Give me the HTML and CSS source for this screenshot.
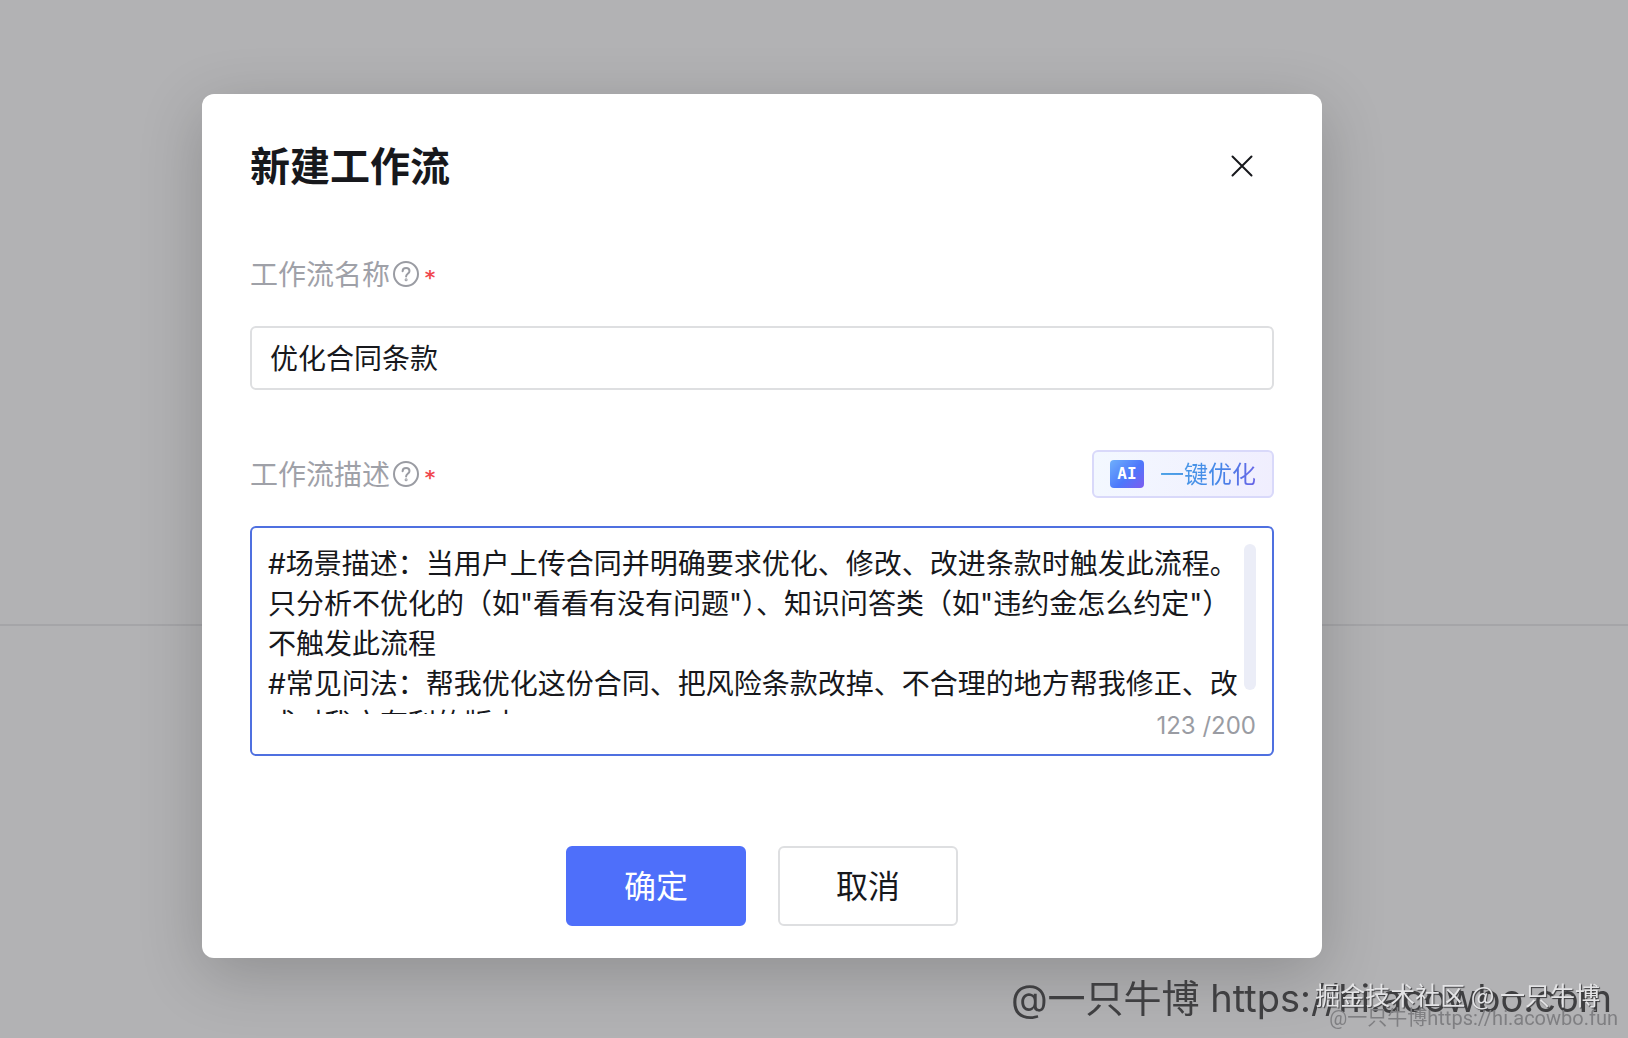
FILE: index.html
```
<!DOCTYPE html>
<html lang="zh-CN">

<head>
    <meta charset="UTF-8">
    <meta name="viewport" content="width=device-width, initial-scale=1.0">
    <title>新建工作流</title>
    <link rel="stylesheet" href="styles.css">
</head>

<body>

    <hr class="page-line">

    <div class="overlay">
        <form class="modal" role="dialog" aria-labelledby="modalTitle">
            <div class="modal-header">
                <h1 id="modalTitle">新建工作流</h1>
                <button type="button" class="close-btn" aria-label="关闭">
                    <svg width="24" height="24" viewBox="0 0 24 24" fill="none" stroke="#17181c" stroke-width="2" stroke-linecap="round">
                        <path d="M2.5 2.5l19 19M21.5 2.5l-19 19"/>
                    </svg>
                </button>
            </div>

            <!-- Workflow name -->
            <div class="field">
                <div class="label-row">
                    <label for="flowName">工作流名称</label>
                    <svg class="help" width="28" height="28" viewBox="0 0 28 28" fill="none" stroke="#9a9ca3" stroke-width="2" stroke-linecap="round">
                        <circle cx="14" cy="14" r="12"/>
                        <path d="M10.6 11.2c0-2 1.5-3.3 3.5-3.3s3.4 1.3 3.4 3c0 1.4-.8 2.1-1.8 2.9-1 .8-1.6 1.3-1.6 2.7"/>
                        <circle cx="14.1" cy="19.8" r=".5"/>
                    </svg>
                    <span class="required">*</span>
                </div>
                <input type="text" id="flowName" class="text-input" value="优化合同条款">
            </div>

            <!-- Workflow description -->
            <div class="field">
                <div class="label-row">
                    <label for="flowDesc">工作流描述</label>
                    <svg class="help" width="28" height="28" viewBox="0 0 28 28" fill="none" stroke="#9a9ca3" stroke-width="2" stroke-linecap="round">
                        <circle cx="14" cy="14" r="12"/>
                        <path d="M10.6 11.2c0-2 1.5-3.3 3.5-3.3s3.4 1.3 3.4 3c0 1.4-.8 2.1-1.8 2.9-1 .8-1.6 1.3-1.6 2.7"/>
                        <circle cx="14.1" cy="19.8" r=".5"/>
                    </svg>
                    <span class="required">*</span>
                    <button type="button" class="ai-btn">
                        <span class="ai-icon">AI</span>
                        <span class="ai-text">一键优化</span>
                    </button>
                </div>
                <div class="textarea-box">
                    <div class="textarea-row">
                        <textarea id="flowDesc">#场景描述：当用户上传合同并明确要求优化、修改、改进条款时触发此流程。只分析不优化的（如"看看有没有问题"）、知识问答类（如"违约金怎么约定"）不触发此流程
#常见问法：帮我优化这份合同、把风险条款改掉、不合理的地方帮我修正、改成对我方有利的版本</textarea>
                        <div class="scroll-thumb"></div>
                    </div>
                    <div class="counter">123 /200</div>
                </div>
            </div>

            <div class="actions">
                <button type="submit" class="btn btn-primary">确定</button>
                <button type="button" class="btn">取消</button>
            </div>
        </form>
    </div>

    <!-- Watermarks -->
    <div class="mark mark-large">@一只牛博 https://hi.acowbo.com</div>
    <div class="mark mark-small">@一只牛博https://hi.acowbo.fun</div>
    <div class="mark mark-light">掘金技术社区 @ 一只牛博</div>

</body>

</html>
```

FILE: styles.css
```
* {
    box-sizing: border-box;
}

body {
    font-family: Inter, "Noto Sans CJK SC", sans-serif;
    background-color: #b2b2b4;
    color: #17181c;
    margin: 0;
    min-height: 100vh;
    overflow: hidden;
}

button, input, textarea {
    font-family: inherit;
    color: inherit;
    margin: 0;
}

button {
    cursor: pointer;
}

.page-line {
    position: absolute;
    top: 624px;
    left: 0;
    right: 0;
    margin: 0;
    border: none;
    border-top: 2px solid #a5a5a8;
}

.overlay {
    position: relative;
    padding: 94px 306px 80px 202px;
}

.modal {
    padding: 48px 48px 32px;
    background-color: #ffffff;
    border-radius: 12px;
    box-shadow: 0 16px 64px rgba(0, 0, 0, 0.2);
}

.modal-header {
    display: flex;
    align-items: center;
    justify-content: space-between;
    height: 50px;
    margin-bottom: 58px;
}

h1 {
    margin: 0;
    font-size: 40px;
    line-height: 50px;
    font-weight: 600;
}

.close-btn {
    display: flex;
    align-items: center;
    justify-content: center;
    width: 64px;
    height: 48px;
    padding: 0 0 2px;
    border: none;
    background: none;
}

.field {
    margin-bottom: 60px;
}

.label-row {
    display: flex;
    align-items: center;
    height: 48px;
    margin-bottom: 28px;
    color: #9fa1a8;
    font-size: 28px;
}

.label-row label {
    padding-bottom: 2px;
}

.help {
    margin-left: 2px;
}

.required {
    margin-left: 4px;
    padding-top: 6px;
    color: #f0484f;
    font-family: "DejaVu Sans Mono", monospace;
    font-size: 20px;
    line-height: 24px;
    font-weight: 700;
}

.text-input {
    display: block;
    width: 100%;
    height: 64px;
    padding: 0 18px 2px;
    border: 2px solid #dedfe1;
    border-radius: 6px;
    background: #ffffff;
    font-size: 28px;
    outline: none;
}

.ai-btn {
    display: flex;
    align-items: center;
    gap: 16px;
    height: 48px;
    margin-left: auto;
    padding: 0 16px;
    border: 2px solid #d9d9fa;
    border-radius: 6px;
    background: linear-gradient(100deg, #f3f8ff, #f0eefe);
}

.ai-icon {
    width: 34px;
    height: 28px;
    border-radius: 4px;
    background: linear-gradient(135deg, #6fb0fb, #4d78fb 55%, #7d5cf0);
    color: #ffffff;
    font-family: "DejaVu Sans Mono", monospace;
    font-size: 16px;
    line-height: 28px;
    font-weight: 700;
    text-align: center;
}

.ai-text {
    padding-bottom: 3px;
    background: linear-gradient(100deg, #4ca3e6, #4587e8 60%, #6a62e6);
    -webkit-background-clip: text;
    background-clip: text;
    color: transparent;
    font-size: 24px;
}

.textarea-box {
    padding: 16px;
    border: 2px solid #4f70e0;
    border-radius: 6px;
}

.textarea-row {
    display: flex;
    gap: 4px;
}

textarea {
    flex: 1;
    height: 170px;
    padding: 0;
    border: none;
    outline: none;
    background: none;
    font-size: 28px;
    line-height: 40px;
    resize: none;
    overflow: hidden;
}

.scroll-thumb {
    width: 12px;
    height: 146px;
    border-radius: 6px;
    background-color: #ebedf7;
}

.counter {
    color: #9a9ca3;
    font-size: 24px;
    line-height: 24px;
    text-align: right;
}

.actions {
    display: flex;
    justify-content: center;
    gap: 32px;
    margin-top: 90px;
}

.btn {
    width: 180px;
    height: 80px;
    padding: 0 0 4px;
    border: 2px solid #dedfe1;
    border-radius: 6px;
    background-color: #ffffff;
    font-size: 32px;
}

.btn-primary {
    border-color: #4e6ffa;
    background-color: #4e6ffa;
    color: #ffffff;
}

.mark {
    position: fixed;
    white-space: nowrap;
    pointer-events: none;
}

.mark-large {
    right: 16px;
    bottom: 16px;
    color: #3f3f41;
    font-size: 38px;
    line-height: 48px;
}

.mark-small {
    right: 10px;
    bottom: 8px;
    color: #7f7f82;
    font-family: Roboto, "Noto Sans CJK SC", sans-serif;
    font-size: 20px;
    line-height: 24px;
}

.mark-light {
    right: 28px;
    bottom: 28px;
    color: #e4e4e6;
    font-family: "Noto Sans CJK SC", sans-serif;
    font-size: 25px;
    line-height: 32px;
    text-shadow: 1px 1px 1px #3a3a3c;
}
```
